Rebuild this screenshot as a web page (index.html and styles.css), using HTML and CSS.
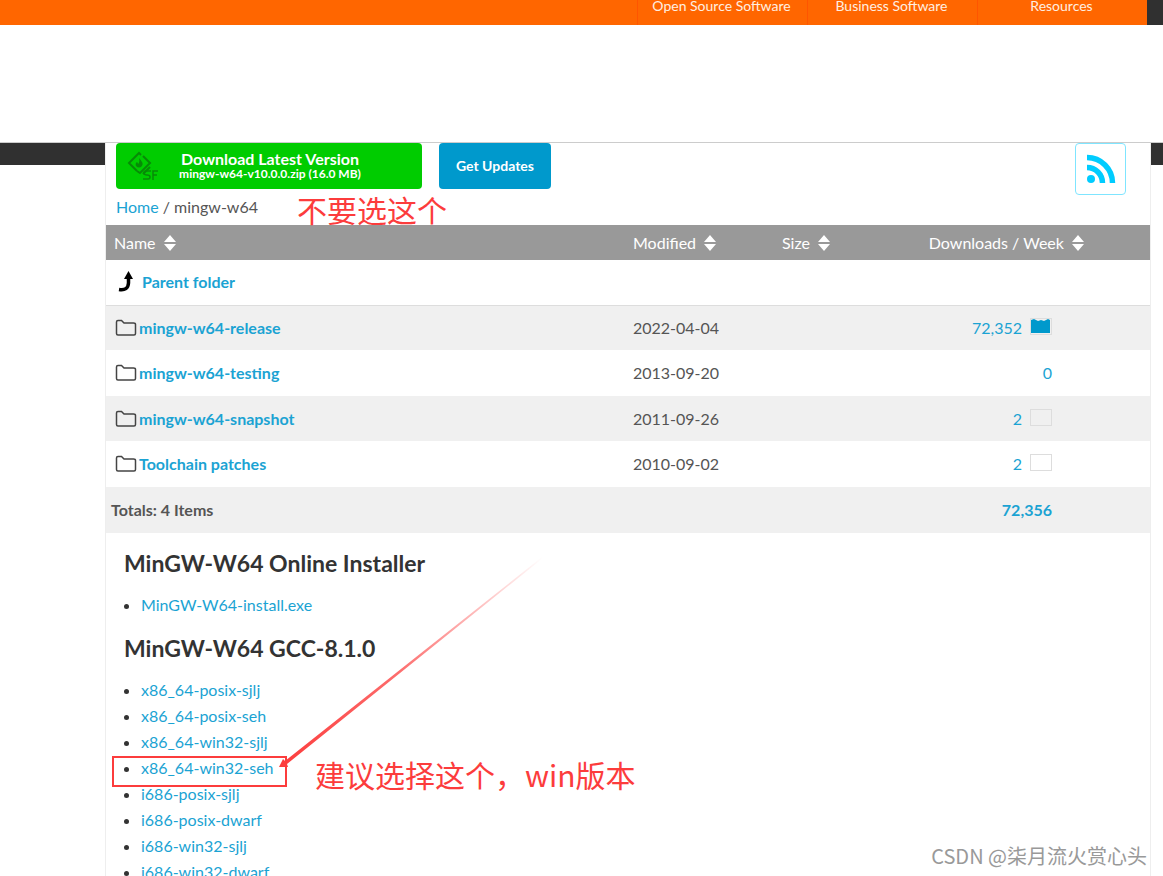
FILE: index.html
```html
<!DOCTYPE html>
<html lang="en">
<head>
<meta charset="utf-8">
<title>mingw-w64 files</title>
<link rel="stylesheet" href="styles.css">
</head>
<body>
<svg class="defs" aria-hidden="true">
  <symbol id="folder" viewBox="0 0 22 18"><path d="M1.500 14.500V3Q1.500 1.500 3 1.500H6.500L9 4H18.500Q20.500 4 20.500 5.500V14.500Q20.500 16 19 16H3Q1.500 16 1.500 14.500Z" fill="none" stroke="#444" stroke-width="1.500"/></symbol>
  <symbol id="sort" viewBox="0 0 12 16"><path d="M6 0L12 7H0ZM0 9H12L6 16Z" fill="#fff"/></symbol>
</svg>
<nav class="topnav">
  <a href="#">Open Source Software</a>
  <a href="#">Business Software</a>
  <a href="#">Resources</a>
</nav>
<main class="stage">
  <div class="sheet">
    <div class="actions">
      <button class="btn download">
        <svg class="sf" viewBox="0 0 34 30" aria-hidden="true">
          <g fill="none" stroke="#078a07" stroke-width="2"><path d="M11 20L3 12L13 2L15 4"/><path d="M17 5L24 12L14 22L11 20"/><path d="M24 16L17 23"/></g>
          <path d="M13 7Q18 12 16 15Q13 18 10 15Q9 12 11 11Q12 12 12 13Q14 11 13 7Z" fill="#078a07"/>
          <path d="M25 20H20Q18 20 18 22Q18 24 21 24Q24 24 24 26Q24 28 22 28H17M27 29V20H32M27 24H31" fill="none" stroke="#078a07" stroke-width="1.500"/>
        </svg>
        <span class="label"><span class="big">Download Latest Version</span><span class="small">mingw-w64-v10.0.0.zip (16.0 MB)</span></span>
      </button>
      <button class="btn updates">Get Updates</button>
      <a class="rss" href="#" aria-label="RSS feed"><svg viewBox="0 0 30 30" aria-hidden="true"><circle cx="5" cy="25" r="4" fill="#0cf"/><path d="M1 13.500A15.500 15.500 0 0 1 16.500 29M1 3.500A25.500 25.500 0 0 1 26.500 29" fill="none" stroke="#0cf" stroke-width="5.500"/></svg></a>
    </div>
    <div class="crumbs"><a href="#">Home</a> / mingw-w64</div>
    <table class="files">
      <colgroup><col><col class="c-mod"><col class="c-size"><col class="c-down"></colgroup>
      <thead><tr>
        <th>Name <svg class="sort"><use href="#sort"/></svg></th>
        <th>Modified <svg class="sort"><use href="#sort"/></svg></th>
        <th>Size <svg class="sort"><use href="#sort"/></svg></th>
        <th class="down">Downloads / Week <svg class="sort"><use href="#sort"/></svg></th>
      </tr></thead>
      <tbody>
        <tr class="parent"><td colspan="4"><a class="name" href="#"><svg class="up" viewBox="0 0 18 22" aria-hidden="true"><path d="M1 18.500Q10 20 10.500 12V6" fill="none" stroke="#000" stroke-width="3.500"/><path d="M10.500 0L15 8H6Z"/></svg>Parent folder</a></td></tr>
        <tr><td><a class="name" href="#"><svg class="folder"><use href="#folder"/></svg>mingw-w64-release</a></td><td>2022-04-04</td><td></td><td class="num"><a href="#">72,352</a><svg class="spark" viewBox="0 0 22 17"><rect x="0.500" y="0.500" width="21" height="16" fill="none" stroke="#ddd"/><path d="M1 2L4 1L8 3L11 2L14 3L18 1L20 2V15H1Z" fill="#09c"/></svg></td></tr>
        <tr><td><a class="name" href="#"><svg class="folder"><use href="#folder"/></svg>mingw-w64-testing</a></td><td>2013-09-20</td><td></td><td class="num"><a href="#">0</a></td></tr>
        <tr><td><a class="name" href="#"><svg class="folder"><use href="#folder"/></svg>mingw-w64-snapshot</a></td><td>2011-09-26</td><td></td><td class="num"><a href="#">2</a><svg class="spark" viewBox="0 0 22 17"><rect x="0.500" y="0.500" width="21" height="16" fill="none" stroke="#ddd"/></svg></td></tr>
        <tr><td><a class="name" href="#"><svg class="folder"><use href="#folder"/></svg>Toolchain patches</a></td><td>2010-09-02</td><td></td><td class="num"><a href="#">2</a><svg class="spark" viewBox="0 0 22 17"><rect x="0.500" y="0.500" width="21" height="16" fill="none" stroke="#ddd"/></svg></td></tr>
      </tbody>
      <tfoot><tr><td class="totals" colspan="3">Totals: 4 Items</td><td class="num"><a href="#">72,356</a></td></tr></tfoot>
    </table>
    <section class="readme">
      <h2>MinGW-W64 Online Installer</h2>
      <ul><li><a href="#">MinGW-W64-install.exe</a></li></ul>
      <h2>MinGW-W64 GCC-8.1.0</h2>
      <ul>
        <li><a href="#">x86_64-posix-sjlj</a></li>
        <li><a href="#">x86_64-posix-seh</a></li>
        <li><a href="#">x86_64-win32-sjlj</a></li>
        <li><a href="#">x86_64-win32-seh</a></li>
        <li><a href="#">i686-posix-sjlj</a></li>
        <li><a href="#">i686-posix-dwarf</a></li>
        <li><a href="#">i686-win32-sjlj</a></li>
        <li><a href="#">i686-win32-dwarf</a></li>
      </ul>
    </section>
    <div class="note note-avoid" lang="zh">不要选这个</div>
    <div class="mark"></div>
    <svg class="arrow" viewBox="0 0 270 216" aria-hidden="true">
      <defs><linearGradient id="fade" gradientUnits="userSpaceOnUse" x1="4" y1="212" x2="266" y2="2"><stop offset="0" stop-color="#fc3c3c"/><stop offset="0.450" stop-color="#fc3c3c" stop-opacity="0.750"/><stop offset="1" stop-color="#fc3c3c" stop-opacity="0"/></linearGradient></defs>
      <path d="M2 211L6 203L8 205L265 1L266 2L10 208L11 211Z" fill="url(#fade)"/>
    </svg>
    <div class="note note-pick" lang="zh">建议选择这个，win版本</div>
  </div>
</main>
<div class="watermark" lang="zh">CSDN @柒月流火赏心头</div>
</body>
</html>
```
FILE: styles.css
```css
* { box-sizing: border-box; }
body {
  margin: 0;
  height: 100vh;
  overflow: hidden;
  position: relative;
  background: #fff;
  color: #555;
  font: 16px/26px Lato, "Noto Sans CJK SC", sans-serif;
}
a { color: #1ba3d3; text-decoration: none; }
.defs { display: none; }
.topnav {
  display: flex;
  justify-content: flex-end;
  height: 25px;
  background: #f60;
  border-right: 16px solid #303030;
}
.topnav a {
  width: 170px;
  height: 25px;
  padding-right: 2px;
  border-left: 1px solid #ff5500;
  color: #ffefe0;
  font-size: 14px;
  line-height: 12px;
  text-align: center;
}
.stage {
  margin-top: 117px;
  padding: 0 12px 0 105px;
  border-top: 1px solid #ccc;
  background: linear-gradient(#303030 22px, #fff 22px);
}
.sheet {
  position: relative;
  background: #fff;
  border: solid #eee;
  border-width: 0 1px;
}
.actions {
  display: flex;
  align-items: flex-start;
  height: 52px;
  padding: 0 24px 0 10px;
}
.btn {
  height: 46px;
  border: 0;
  border-radius: 4px;
  color: #fff;
  font: bold 14px/16px Lato, sans-serif;
}
.download {
  display: flex;
  align-items: center;
  width: 306px;
  padding: 0 10px;
  background: #0c0;
}
.sf { width: 34px; height: 30px; }
.label { flex: 1; padding-right: 32px; }
.label span { display: block; }
.big { font-size: 16px; }
.label .small { font-size: 12px; line-height: 14px; }
.updates { width: 112px; margin-left: 17px; background: #09c; }
.rss {
  display: flex;
  justify-content: center;
  align-items: center;
  width: 51px;
  height: 52px;
  margin-left: auto;
  border: 1px solid #7fe5ff;
  border-radius: 4px;
}
.rss svg { width: 30px; height: 30px; }
.crumbs { height: 30px; padding-left: 10px; line-height: 24px; }
.files {
  width: 100%;
  border-collapse: collapse;
  table-layout: fixed;
}
.c-mod { width: 149px; }
.c-size { width: 110px; }
.c-down { width: 266px; }
.files th {
  height: 35px;
  padding: 0 8px;
  background: #999;
  color: #fff;
  font-weight: normal;
  text-align: left;
}
.files .down { padding-right: 66px; text-align: right; }
.sort { width: 12px; height: 16px; margin-left: 4px; vertical-align: -2px; }
.files td { height: 46px; padding: 0 8px; }
.files tbody tr:nth-child(even) td { height: 45px; }
.files .parent td { height: 45px; border-bottom: 1px solid #ddd; }
.files tbody tr:nth-child(even), .files tfoot tr { background: #f0f0f0; }
.name { display: flex; align-items: center; font-weight: bold; }
.folder { width: 22px; height: 18px; margin: 0 2px 0 1px; }
.up { width: 18px; height: 22px; margin: 0 6px 0 4px; }
.files .num { padding-right: 98px; text-align: right; }
.spark { width: 22px; height: 17px; margin-left: 8px; vertical-align: -1px; }
.files tfoot td { font-weight: bold; }
.files .totals { padding-left: 5px; }
.readme { padding: 14px 18px 0; color: #333; }
.readme h2 { margin: 0; font-size: 23px; line-height: 33px; font-weight: bold; }
.readme ul { margin: 12px 0 14px; padding-left: 17px; }
.note {
  position: absolute;
  color: #fc3c3c;
  font: 30px/36px "Noto Sans CJK SC", sans-serif;
  white-space: nowrap;
}
.note-avoid { left: 191px; top: 48px; }
.note-pick { left: 209px; top: 613px; }
.mark {
  position: absolute;
  left: 6px;
  top: 613px;
  width: 175px;
  height: 31px;
  border: 2px solid #fc3c3c;
}
.arrow { position: absolute; left: 171px; top: 413px; width: 270px; height: 216px; }
.watermark {
  position: absolute;
  right: 16px;
  bottom: 6px;
  color: #999;
  font: 20px/28px "Noto Sans CJK SC", sans-serif;
}
```
